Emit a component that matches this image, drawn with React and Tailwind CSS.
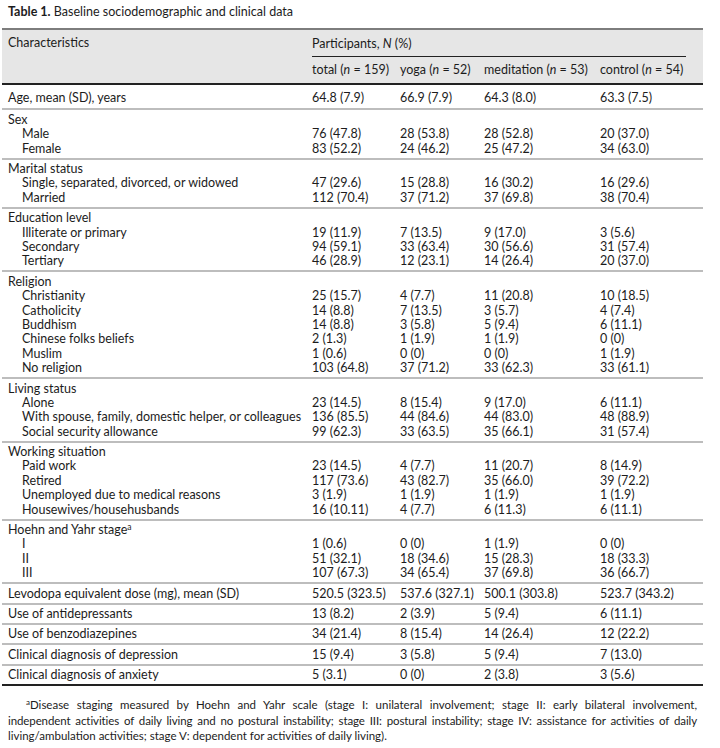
import React from "react";

const font = { fontFamily: "Lato, 'Open Sans', sans-serif" };

// table body: single rows have values, groups have sub rows
const blocks = [
  { label: "Age, mean (SD), years", values: ["64.8 (7.9)", "66.9 (7.9)", "64.3 (8.0)", "63.3 (7.5)"] },
  {
    label: "Sex",
    rows: [
      ["Male", "76 (47.8)", "28 (53.8)", "28 (52.8)", "20 (37.0)"],
      ["Female", "83 (52.2)", "24 (46.2)", "25 (47.2)", "34 (63.0)"],
    ],
  },
  {
    label: "Marital status",
    rows: [
      ["Single, separated, divorced, or widowed", "47 (29.6)", "15 (28.8)", "16 (30.2)", "16 (29.6)"],
      ["Married", "112 (70.4)", "37 (71.2)", "37 (69.8)", "38 (70.4)"],
    ],
  },
  {
    label: "Education level",
    rows: [
      ["Illiterate or primary", "19 (11.9)", "7 (13.5)", "9 (17.0)", "3 (5.6)"],
      ["Secondary", "94 (59.1)", "33 (63.4)", "30 (56.6)", "31 (57.4)"],
      ["Tertiary", "46 (28.9)", "12 (23.1)", "14 (26.4)", "20 (37.0)"],
    ],
  },
  {
    label: "Religion",
    rows: [
      ["Christianity", "25 (15.7)", "4 (7.7)", "11 (20.8)", "10 (18.5)"],
      ["Catholicity", "14 (8.8)", "7 (13.5)", "3 (5.7)", "4 (7.4)"],
      ["Buddhism", "14 (8.8)", "3 (5.8)", "5 (9.4)", "6 (11.1)"],
      ["Chinese folks beliefs", "2 (1.3)", "1 (1.9)", "1 (1.9)", "0 (0)"],
      ["Muslim", "1 (0.6)", "0 (0)", "0 (0)", "1 (1.9)"],
      ["No religion", "103 (64.8)", "37 (71.2)", "33 (62.3)", "33 (61.1)"],
    ],
  },
  {
    label: "Living status",
    rows: [
      ["Alone", "23 (14.5)", "8 (15.4)", "9 (17.0)", "6 (11.1)"],
      ["With spouse, family, domestic helper, or colleagues", "136 (85.5)", "44 (84.6)", "44 (83.0)", "48 (88.9)"],
      ["Social security allowance", "99 (62.3)", "33 (63.5)", "35 (66.1)", "31 (57.4)"],
    ],
  },
  {
    label: "Working situation",
    rows: [
      ["Paid work", "23 (14.5)", "4 (7.7)", "11 (20.7)", "8 (14.9)"],
      ["Retired", "117 (73.6)", "43 (82.7)", "35 (66.0)", "39 (72.2)"],
      ["Unemployed due to medical reasons", "3 (1.9)", "1 (1.9)", "1 (1.9)", "1 (1.9)"],
      ["Housewives/househusbands", "16 (10.11)", "4 (7.7)", "6 (11.3)", "6 (11.1)"],
    ],
  },
  {
    label: "Hoehn and Yahr stage",
    sup: true,
    rows: [
      ["I", "1 (0.6)", "0 (0)", "1 (1.9)", "0 (0)"],
      ["II", "51 (32.1)", "18 (34.6)", "15 (28.3)", "18 (33.3)"],
      ["III", "107 (67.3)", "34 (65.4)", "37 (69.8)", "36 (66.7)"],
    ],
  },
  { label: "Levodopa equivalent dose (mg), mean (SD)", values: ["520.5 (323.5)", "537.6 (327.1)", "500.1 (303.8)", "523.7 (343.2)"] },
  { label: "Use of antidepressants", values: ["13 (8.2)", "2 (3.9)", "5 (9.4)", "6 (11.1)"] },
  { label: "Use of benzodiazepines", values: ["34 (21.4)", "8 (15.4)", "14 (26.4)", "12 (22.2)"] },
  { label: "Clinical diagnosis of depression", values: ["15 (9.4)", "3 (5.8)", "5 (9.4)", "7 (13.0)"] },
  { label: "Clinical diagnosis of anxiety", values: ["5 (3.1)", "0 (0)", "2 (3.8)", "3 (5.6)"] },
];

const cols = "grid grid-cols-[310px_88px_84px_116px_1fr]";

function Row({ label, values, indent }) {
  return (
    <div className={`${cols} h-[14.4px] leading-[14.4px]`}>
      <div className={indent ? "pl-[20px]" : "pl-[6px]"}>{label}</div>
      {values.map((v, i) => (
        <div key={i} className="whitespace-nowrap">{v}</div>
      ))}
    </div>
  );
}

export default function App() {
  return (
    <div className="w-[720px] h-[748px] bg-white text-[#1c1c1c] text-[12.5px]" style={font}>
      <div className="pt-[4px] pl-[8px] h-[28px] text-[12.5px] leading-[16px]">
        <span className="font-bold">Table 1.</span> Baseline sociodemographic and clinical data
      </div>

      <div className="ml-[2px] w-[701px]">
        {/* header */}
        <div className="border-t-2 border-[#7d7d7d] bg-[#e6e6e6] border-b-2 border-b-[#222]">
          <div className={`${cols} h-[27px] items-center`}>
            <div className="pl-[6px]">Characteristics</div>
            <div className="col-span-4 self-stretch flex flex-col justify-center">
              <div className="mr-[17px] border-b border-[#222] h-full flex items-center pt-[2px]">
                <span>
                  Participants, <i>N</i> (%)
                </span>
              </div>
            </div>
          </div>
          <div className={`${cols} h-[26px] items-center`}>
            <div />
            <div className="whitespace-nowrap">total (<i>n</i> = 159)</div>
            <div className="whitespace-nowrap">yoga (<i>n</i> = 52)</div>
            <div className="whitespace-nowrap">meditation (<i>n</i> = 53)</div>
            <div className="whitespace-nowrap">control (<i>n</i> = 54)</div>
          </div>
        </div>

        {/* body */}
        {blocks.map((b, i) => (
          <div
            key={i}
            className={`${i === 0 ? "pt-[6px] pb-[3px]" : "pt-[2.5px] pb-[1.5px]"} border-b-2 ${
              i === blocks.length - 1 ? "border-[#222]" : "border-[#bdbdbd]"
            }`}
          >
            {b.values ? (
              <Row label={b.label} values={b.values} />
            ) : (
              <>
                <div className="pl-[6px] h-[14.4px] leading-[14.4px]">
                  {b.label}
                  {b.sup && <sup className="text-[8.5px]">a</sup>}
                </div>
                {b.rows.map((r, j) => (
                  <Row key={j} label={r[0]} values={r.slice(1)} indent />
                ))}
              </>
            )}
          </div>
        ))}

        {/* footnote, lines broken as in the print layout */}
        <div className="pt-[11px] pb-[6px] px-[6px] text-[11.5px] leading-[15.5px] text-justify [text-align-last:justify] border-b-2 border-[#222]">
          <div className="pl-[18px]">
            <sup className="text-[8px]">a</sup>Disease staging measured by Hoehn and Yahr scale (stage I: unilateral
            involvement; stage II: early bilateral involvement,
          </div>
          <div className="[word-spacing:-1.5px] tracking-[-0.1px]">
            independent activities of daily living and no postural instability; stage III: postural instability; stage
            IV: assistance for activities of daily
          </div>
          <div className="[text-align-last:left]">
            living/ambulation activities; stage V: dependent for activities of daily living).
          </div>
        </div>
      </div>
    </div>
  );
}
